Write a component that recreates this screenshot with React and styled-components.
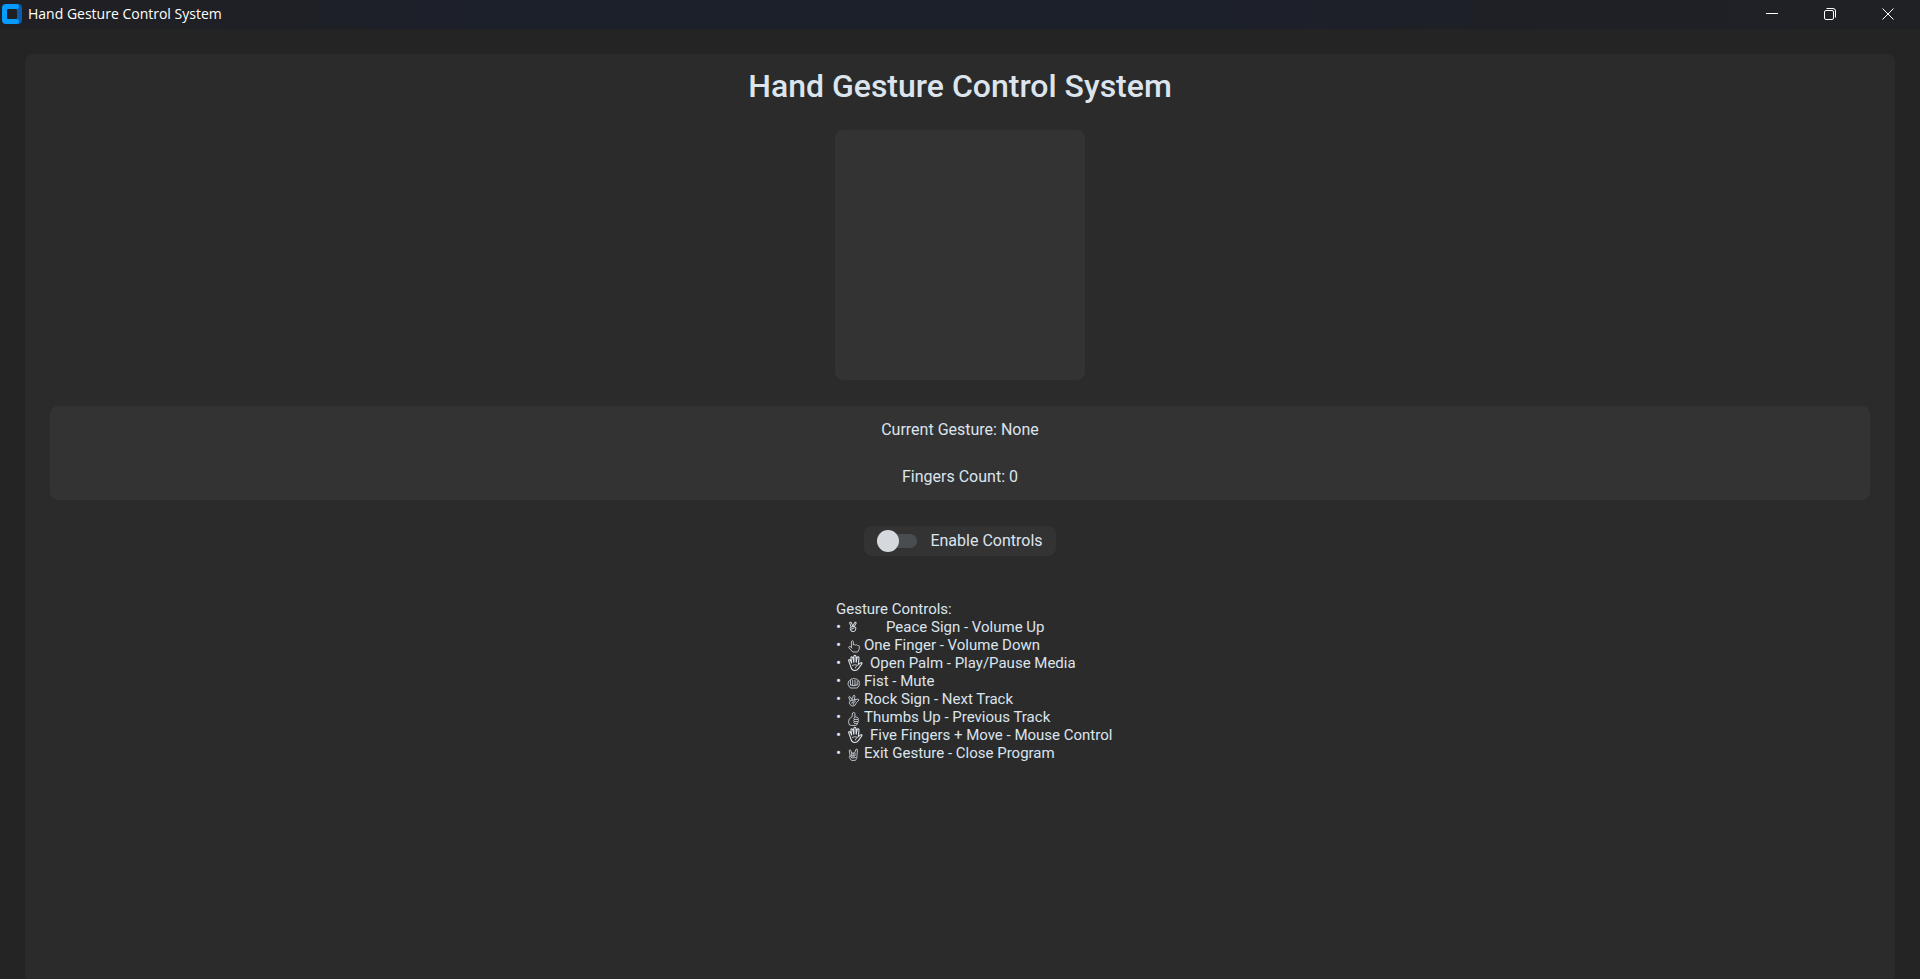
import React, { useState } from "react";
import styled, { createGlobalStyle } from "styled-components";

const GlobalStyle = createGlobalStyle`
  *, *::before, *::after { box-sizing: border-box; }
  body {
    margin: 0;
    background: #242424;
    color: #dce4ee;
    font-family: Roboto, sans-serif;
  }
`;

const Window = styled.div`
  display: flex;
  flex-direction: column;
  min-height: 100vh;
`;

const TitleBar = styled.header`
  display: flex;
  align-items: center;
  height: 29px;
  padding: 0 3px 1px 2px;
  background: linear-gradient(90deg, #202024 0%, #1f2025 12%, #1c202b 26%, #1c202b 62%, #1f2026 80%, #202125 100%);
`;

const WindowTitle = styled.span`
  flex: 1;
  margin-left: 6px;
  color: #ffffff;
  font-family: "Open Sans", sans-serif;
  font-size: 14px;
  line-height: 20px;
`;

const WindowButton = styled.button`
  display: flex;
  align-items: center;
  justify-content: center;
  width: 58px;
  height: 28px;
  padding: 0;
  border: 0;
  background: transparent;
  color: #ffffff;
`;

const Panel = styled.main`
  flex: 1;
  display: flex;
  flex-direction: column;
  align-items: center;
  margin: 25px 25px 0;
  padding: 12px 25px;
  border-radius: 8px 8px 0 0;
  background: #2b2b2b;
`;

const Heading = styled.h1`
  margin: 0 0 24px;
  font-size: 32px;
  font-weight: 500;
  line-height: 40px;
`;

const Preview = styled.div`
  width: 250px;
  height: 250px;
  border-radius: 8px;
  background: #333333;
`;

const Status = styled.section`
  align-self: stretch;
  display: flex;
  flex-direction: column;
  align-items: center;
  gap: 23px;
  margin-top: 26px;
  padding: 12px 12px 11px;
  border-radius: 8px;
  background: #333333;
`;

const StatusText = styled.p`
  margin: 0;
  font-size: 16px;
  line-height: 24px;
`;

const ToggleRow = styled.label`
  display: flex;
  align-items: center;
  gap: 13px;
  height: 30px;
  margin-top: 26px;
  padding: 0 13px;
  border-radius: 8px;
  background: #333333;
  font-size: 16px;
  line-height: 24px;
`;

const Switch = styled.input`
  appearance: none;
  display: grid;
  align-items: center;
  width: 40px;
  height: 22px;
  margin: 0;

  &::before,
  &::after {
    content: "";
    grid-area: 1 / 1;
  }
  &::before {
    height: 14px;
    border-radius: 7px;
    background: #4a4d50;
  }
  &:checked::before {
    background: #1f6aa5;
  }
  &::after {
    width: 22px;
    height: 22px;
    border-radius: 50%;
    background: #d5d9de;
  }
  &:checked::after {
    justify-self: end;
  }
`;

const Guide = styled.section`
  width: 248px;
  margin-top: 44px;
  font-size: 15px;
  line-height: 18px;
  white-space: nowrap;
`;

const GuideTitle = styled.h2`
  margin: 0;
  font-size: 15px;
  font-weight: 400;
  line-height: 18px;
`;

const GuideList = styled.ul`
  margin: 0;
  padding: 0;
  list-style: none;
`;

const GuideItem = styled.li`
  display: flex;
  align-items: center;
  width: max-content;
  height: 18px;
`;

const Bullet = styled.span`
  flex: none;
  width: 11px;
`;

const IconSlot = styled.span`
  flex: none;
  display: flex;
  align-items: center;
  width: ${(p) => p.$width}px;
  height: 18px;
`;

const Glyph = styled.svg`
  flex: none;
  fill: none;
  stroke: #dce4ee;
  stroke-width: 0.8;
  stroke-linecap: round;
  stroke-linejoin: round;
`;

const ICONS = {
  peace: (
    <g strokeWidth="1">
      <path d="M4.200 9 2.500 4.600 4 4 5.800 8 8 4 9.300 4.700 7.200 8.800" />
      <path d="M4.200 9 7 8.400 9 9.800 8.300 12.600 6.900 13.600 4.200 13.200 3.300 11Z" />
      <path d="M4.400 11.200 7 10" />
    </g>
  ),
  finger: (
    <path d="M4.400 11V5.400Q5.400 4 6.300 5.400V9Q7.800 7.900 8.500 9.200 9.900 8.200 10.500 9.600 12.300 9 12.400 10.800 12.600 13.600 10.600 16H5.800Q4 14 1.700 11.600 1.800 10.200 3.300 10.600L5 12" />
  ),
  palm: (
    <g strokeWidth="1.100">
      <path d="M3.500 11.600 1.600 6.600Q1.700 5.200 3 5.700L4.700 9 3.900 3.600Q4.600 2.300 5.700 3.400L6.900 8.300 6.900 2Q7.900 .7 8.900 2L9.200 8.300 10.100 3.200Q11.300 2.300 12 3.700L11.400 10.600 13.500 8.900Q15.200 8.200 15 9.500L11.400 14.600Q9.800 16.700 7.200 16.400 4.300 16 3.500 11.600Z" />
      <path d="M5.200 11.400Q7.500 9.900 10.600 11.300 8.400 12 8.400 14" strokeWidth="0.800" />
    </g>
  ),
  fist: (
    <g transform="translate(0 1)">
      <path d="M2.600 14.200 1 11.400 1.600 8.400 3.400 7.200Q3.800 5.200 5.400 6 6.800 4.600 8.100 6 9.700 5.100 10.300 6.900 12.200 6.900 12.200 9V12.500L10.200 15H4.300Z" />
      <path d="M3.500 7.600V12M5.700 7.400V12.400M8 7.400V12.400M10.200 8V12M3.500 12Q7 13.600 10.200 12" />
    </g>
  ),
  rock: (
    <g transform="translate(0 1.500)">
      <path d="M3 9 1.700 5.500Q2.300 4.400 3.300 5.400L4.800 8 6.600 3.900Q7.800 3.400 7.900 4.800L7.400 8.200 11.100 7.600Q12.700 8.200 11.400 9.300L9.500 11 8 13.700Q6 15.300 3.900 14.100L2.500 11.800Z" />
      <path d="M3.400 9.400 5.400 8.300 6.300 10.600 4.600 11.600M5.800 8.500 7.600 8.400 8.300 10.200 6.400 11.400 6.200 13" />
    </g>
  ),
  thumb: (
    <g transform="translate(0 1)">
      <path d="M2 15.300Q.8 12.200 2.400 9.800L5.100 7.700 5.500 4Q6.800 2.600 8 4.300L7.800 7.700 10.400 8.400Q12 9.200 11.100 10.500 12.100 11.500 11 12.600 11.700 13.800 10.400 14.400 10.400 16 8.600 16.400H4.600Z" />
      <path d="M7.400 8.400Q6 9.400 7.400 10.400H10.800M7.200 10.400Q5.900 11.500 7.300 12.500H10.700M7.200 12.500Q6 13.500 7.400 14.400H10.200" />
    </g>
  ),
  exit: (
    <g transform="translate(0 1)">
      <path d="M3 10 2.200 5.400Q3 4.200 3.800 5.400L4.700 8.200 7.700 7.800 9 4.200Q10.200 3.600 10.400 5L10 10.500Q10.300 13.600 8.400 15.400H4.400L2.600 12.900Z" />
      <path d="M4.600 8.600V11.200H6.200V8.400M6.200 11 8 11V8.400M3.300 10.800 4.800 13 8.600 12.600" />
    </g>
  ),
};

const GESTURES = [
  { icon: "peace", slot: 39, text: "Peace Sign - Volume Up" },
  { icon: "finger", slot: 17, text: "One Finger - Volume Down" },
  { icon: "palm", slot: 23, text: "Open Palm - Play/Pause Media" },
  { icon: "fist", slot: 17, text: "Fist - Mute" },
  { icon: "rock", slot: 17, text: "Rock Sign - Next Track" },
  { icon: "thumb", slot: 17, text: "Thumbs Up - Previous Track" },
  { icon: "palm", slot: 23, text: "Five Fingers + Move - Mouse Control" },
  { icon: "exit", slot: 17, text: "Exit Gesture - Close Program" },
];

function AppLogo() {
  return (
    <svg width="20" height="20" viewBox="0 0 20 20" aria-hidden="true">
      <path d="M14 0h2a4 4 0 0 1 4 4v12a4 4 0 0 1-4 4h-2Z" fill="#0a5cad" />
      <path
        fillRule="evenodd"
        d="M4 0h10.500a2.500 2.500 0 0 1 0 5H7Q5 5 5 7v6q0 2 2 2h7.500a2.500 2.500 0 0 1 0 5H4a4 4 0 0 1-4-4V4a4 4 0 0 1 4-4Z"
        fill="#069bff"
      />
      <rect x="5" y="5" width="10" height="10" rx="1.500" fill="#202024" />
    </svg>
  );
}

export default function App() {
  const [enabled, setEnabled] = useState(false);
  return (
    <Window>
      <GlobalStyle />
      <TitleBar>
        <AppLogo />
        <WindowTitle>Hand Gesture Control System</WindowTitle>
        <WindowButton aria-label="Minimize">
          <svg width="12" height="12" viewBox="0 0 12 12">
            <path d="M0 5.500h12" stroke="currentColor" />
          </svg>
        </WindowButton>
        <WindowButton aria-label="Restore">
          <svg width="12" height="12" viewBox="0 0 12 12" fill="none" stroke="currentColor">
            <rect x=".5" y="2.500" width="9" height="9" rx="1.500" />
            <path d="M2.500.5H9A2.500 2.500 0 0 1 11.500 3V9.500" />
          </svg>
        </WindowButton>
        <WindowButton aria-label="Close">
          <svg width="12" height="12" viewBox="0 0 12 12" stroke="currentColor">
            <path d="M.5.5l11 11M11.500.5l-11 11" />
          </svg>
        </WindowButton>
      </TitleBar>
      <Panel>
        <Heading>Hand Gesture Control System</Heading>
        <Preview />
        <Status>
          <StatusText>Current Gesture: None</StatusText>
          <StatusText>Fingers Count: 0</StatusText>
        </Status>
        <ToggleRow>
          <Switch
            type="checkbox"
            role="switch"
            checked={enabled}
            onChange={(e) => setEnabled(e.target.checked)}
          />
          Enable Controls
        </ToggleRow>
        <Guide>
          <GuideTitle>Gesture Controls:</GuideTitle>
          <GuideList>
            {GESTURES.map((g) => (
              <GuideItem key={g.text}>
                <Bullet>•</Bullet>
                <IconSlot $width={g.slot}>
                  <Glyph width="16" height="18" viewBox="0 0 16 18" aria-hidden="true">
                    {ICONS[g.icon]}
                  </Glyph>
                </IconSlot>
                {g.text}
              </GuideItem>
            ))}
          </GuideList>
        </Guide>
      </Panel>
    </Window>
  );
}
